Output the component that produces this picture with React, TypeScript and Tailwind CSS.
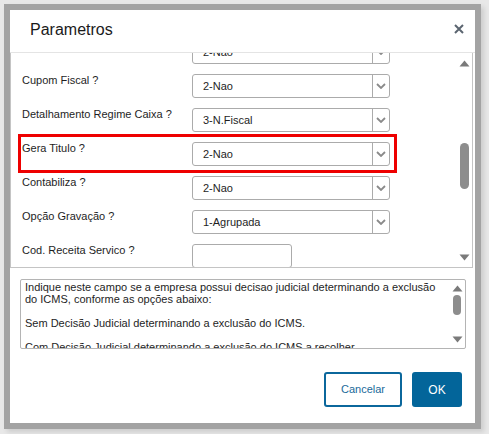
import React from 'react';

const rows = [
  { label: '', value: '2-Nao' },
  { label: 'Cupom Fiscal ?', value: '2-Nao' },
  { label: 'Detalhamento Regime Caixa ?', value: '3-N.Fiscal' },
  { label: 'Gera Titulo ?', value: '2-Nao', marked: true },
  { label: 'Contabiliza ?', value: '2-Nao' },
  { label: 'Opção Gravação ?', value: '1-Agrupada' },
];

const helpLines = [
  'Indique neste campo se a empresa possui decisao judicial determinando a exclusão',
  'do ICMS, conforme as opções abaixo:',
  '',
  'Sem Decisão Judicial determinando a exclusão do ICMS.',
  '',
  'Com Decisão Judicial determinando a exclusão do ICMS a recolher.',
];

function Chevron() {
  return (
    <svg width="10" height="6" viewBox="0 0 10 6" fill="none">
      <path d="M1 1l4 4 4-4" stroke="#8a8a8a" strokeWidth="1.8" />
    </svg>
  );
}

function ArrowUp() {
  return (
    <svg width="11" height="7" viewBox="0 0 11 7">
      <path d="M5.5 0.5L10.5 6.5H0.5Z" fill="#7a7a7a" />
    </svg>
  );
}

function ArrowDown() {
  return (
    <svg width="11" height="7" viewBox="0 0 11 7">
      <path d="M0.5 0.5H10.5L5.5 6.5Z" fill="#7a7a7a" />
    </svg>
  );
}

function Select({ value }: { value: string }) {
  return (
    <div className="flex h-[24px] w-[198px] shrink-0 items-stretch rounded-[3px] border border-[#ababab] bg-white">
      <span className="flex flex-1 items-center pl-[10px] text-[11px] text-[#1e1e1e]">{value}</span>
      <span className="flex w-[17px] items-center justify-center border-l border-[#ababab]">
        <Chevron />
      </span>
    </div>
  );
}

function Row({ label, value, marked }: { label: string; value: string; marked?: boolean }) {
  return (
    <div className="relative flex h-[24px] items-start">
      <span className="-mt-px w-[170px] shrink-0 text-[11px] leading-[14px] text-[#1e1e1e]">{label}</span>
      <Select value={value} />
      {marked && (
        <div className="pointer-events-none absolute left-[-4px] top-[-8px] h-[39px] w-[379px] border-[3px] border-[#ee0000]" />
      )}
    </div>
  );
}

export default function App() {
  return (
    <div className="h-[434px] w-[489px] bg-[#e8e8e8] pl-[4px] pt-[4px] font-['Liberation_Sans',Arial,sans-serif]">
      <div className="flex h-[425px] w-[477px] flex-col border-[6px] border-[#a3a3a3] bg-white shadow-[3px_3px_5px_rgba(0,0,0,0.12)]">
        {/* header */}
        <div className="flex h-[43px] shrink-0 items-center justify-between border-b border-[#e4e4e4] pl-[20px] pr-[11px]">
          <span className="-mt-[3px] text-[16px] text-[#1a1a1a]">Parametros</span>
          <svg width="10" height="10" viewBox="0 0 10 10" className="-mt-[4px]">
            <path d="M1 1l8 8M9 1l-8 8" stroke="#5b6570" strokeWidth="2" />
          </svg>
        </div>

        {/* parameter list */}
        <div className="mr-[2px] flex h-[215px] shrink-0 overflow-hidden border-b border-l border-r border-[#c4c4c4] bg-white">
          <div className="flex-1 overflow-hidden pl-[11px]">
            <div className="-mt-[13px] flex flex-col gap-[10px]">
              {rows.map((r, i) => (
                <Row key={i} label={r.label} value={r.value} marked={r.marked} />
              ))}
              <div className="flex h-[24px] items-start">
                <span className="-mt-px w-[170px] shrink-0 text-[11px] leading-[14px] text-[#1e1e1e]">
                  Cod. Receita Servico ?
                </span>
                <div className="h-[24px] w-[100px] rounded-[3px] border border-[#ababab] bg-white" />
              </div>
            </div>
          </div>
          <div className="flex w-[15px] shrink-0 flex-col items-center">
            <div className="mt-[7px]"><ArrowUp /></div>
            <div className="mt-[76px] h-[46px] w-[9px] rounded-full bg-[#8d8d8d]" />
            <div className="flex-1" />
            <div className="mb-[6px]"><ArrowDown /></div>
          </div>
        </div>

        {/* help text */}
        <div className="ml-[10px] mt-[11px] flex h-[70px] w-[446px] shrink-0 overflow-hidden rounded-[2px] border border-[#b4b4b4] bg-white">
          <div className="flex-1 overflow-hidden pl-[4px] pt-[1px] text-[11px] leading-[12px] text-[#1e1e1e]">
            {helpLines.map((l, i) => (
              <div key={i} className="h-[12px] whitespace-nowrap">{l}</div>
            ))}
          </div>
          <div className="flex w-[16px] shrink-0 flex-col items-center">
            <div className="mt-[5px]"><ArrowUp /></div>
            <div className="mt-[3px] h-[20px] w-[8px] rounded-full bg-[#8d8d8d]" />
            <div className="flex-1" />
            <div className="mb-[5px]"><ArrowDown /></div>
          </div>
        </div>

        {/* actions */}
        <div className="mt-[23px] flex justify-end gap-[10px] pr-[13px]">
          <button className="h-[35px] w-[78px] rounded-[3px] border-2 border-[#0b679c] bg-white text-[11px] text-[#1a6a9a]">
            Cancelar
          </button>
          <button className="h-[35px] w-[50px] rounded-[3px] bg-[#03659a] text-[12px] text-white">OK</button>
        </div>
      </div>
    </div>
  );
}
